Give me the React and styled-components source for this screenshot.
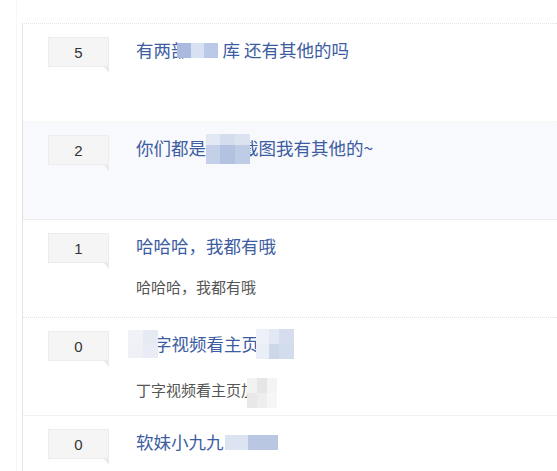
import React from "react";
import styled, { createGlobalStyle } from "styled-components";

const Global = createGlobalStyle`
  html, body { margin: 0; padding: 0; background: #ffffff; }
  body { font-family: "Noto Sans CJK SC", "Liberation Sans", sans-serif; }
`;

const Page = styled.div`
  margin-left: 16px;
  border-left: 1px solid #f7f7f7;
  padding-left: 5px;
  padding-top: 23px;
  min-height: 448px;
`;

const List = styled.ul`
  list-style: none;
  margin: 0;
  padding: 0;
  border-left: 1px solid #e4e4e4;
  border-top: 1px dotted #e2e2e2;
`;

const Row = styled.li`
  display: flex;
  align-items: flex-start;
  height: 84px;
  padding: 13px 0 0 25px;
  background: ${(p) => (p.$active ? "#f7f9fc" : "#ffffff")};
  border-bottom: 1px ${(p) => p.$line} ${(p) => p.$lineColor};
`;

const Badge = styled.div`
  position: relative;
  flex: none;
  box-sizing: border-box;
  width: 61px;
  height: 30px;
  margin-right: 27px;
  background: #f5f5f5;
  border: 1px solid #ececec;
  font-family: "Liberation Sans", Arial, sans-serif;
  font-size: 15px;
  color: #333333;
  display: flex;
  align-items: center;
  justify-content: center;

  &::after {
    content: "";
    position: absolute;
    right: -1px;
    bottom: -7px;
    width: 0;
    height: 0;
    border-top: 6px solid #e9e9e9;
    border-left: 5px solid transparent;
  }
`;

const Content = styled.div`
  display: flex;
  flex-direction: column;
  min-width: 0;
`;

const Title = styled.a`
  display: block;
  font-size: 17.5px;
  line-height: 26px;
  color: #3d5ca2;
  text-decoration: none;
  white-space: nowrap;
`;

const Summary = styled.p`
  margin: 17px 0 0;
  font-size: 15px;
  line-height: 22px;
  color: #555555;
  white-space: nowrap;
`;

const Mosaic = styled.span`
  position: relative;
  z-index: 1;
  display: inline-grid;
  vertical-align: middle;
  grid-template-columns: ${(p) => p.$cols};
  grid-auto-rows: ${(p) => p.$rowH};
  margin-left: ${(p) => p.$ml || 0}px;
  margin-right: ${(p) => p.$mr || 0}px;
  margin-top: ${(p) => p.$mt || 0}px;
`;

const Tile = styled.span`
  display: block;
  background: ${(p) => p.$c};
`;

function Pix({ cols, rowH, colors, ml, mr, mt }) {
  return (
    <Mosaic $cols={cols} $rowH={rowH} $ml={ml} $mr={mr} $mt={mt}>
      {colors.map((c, i) => (
        <Tile key={i} $c={c} />
      ))}
    </Mosaic>
  );
}

export default function App() {
  return (
    <>
      <Global />
      <Page>
        <List>
          <Row $line="dotted" $lineColor="#f3f3f3">
            <Badge>5</Badge>
            <Content>
              <Title href="#">
                有两部
                <Pix
                  cols="14px 13px 14px"
                  rowH="15px"
                  colors={["#a9bade", "#d8e1f1", "#bac9e7"]}
                  ml={-12}
                  mr={5}
                  mt={-3}
                />
                库 还有其他的吗
              </Title>
            </Content>
          </Row>

          <Row $active $line="solid" $lineColor="#ececec">
            <Badge>2</Badge>
            <Content>
              <Title href="#">
                你们都是
                <Pix
                  cols="14px 15px 15px"
                  rowH="11px 19px"
                  colors={[
                    "#e2e8f3",
                    "#d3ddee",
                    "#dbe3f1",
                    "#c4d0e8",
                    "#b3c2e0",
                    "#bfcce6",
                  ]}
                  ml={0}
                  mr={-9}
                  mt={-2}
                />
                截图我有其他的~
              </Title>
            </Content>
          </Row>

          <Row $line="dotted" $lineColor="#e2e2e2">
            <Badge>1</Badge>
            <Content>
              <Title href="#">哈哈哈，我都有哦</Title>
              <Summary>哈哈哈，我都有哦</Summary>
            </Content>
          </Row>

          <Row $line="solid" $lineColor="#f0f0f0">
            <Badge>0</Badge>
            <Content>
              <Title href="#">
                <Pix
                  cols="15px 15px"
                  rowH="14px 14px"
                  colors={["#f0f2f8", "#e6eaf3", "#eef0f6", "#e9ecf4"]}
                  ml={-8}
                  mr={-4}
                  mt={-4}
                />
                字视频看主页
                <Pix
                  cols="13px 10px 15px"
                  rowH="15px 15px"
                  colors={[
                    "#eef1f7",
                    "#e3e9f4",
                    "#d5ddee",
                    "#eaeef6",
                    "#cdd7ea",
                    "#d3dced",
                  ]}
                  ml={-3}
                  mt={-4}
                />
              </Title>
              <Summary>
                丁字视频看主页加
                <Pix
                  cols="10px 10px 10px"
                  rowH="15px 15px"
                  colors={[
                    "#f2f2f2",
                    "#e6e6e6",
                    "#f4f4f4",
                    "#e8e8e8",
                    "#eeeeee",
                    "#f6f6f6",
                  ]}
                  ml={-9}
                  mt={2}
                />
              </Summary>
            </Content>
          </Row>

          <Row $line="dotted" $lineColor="#ffffff">
            <Badge>0</Badge>
            <Content>
              <Title href="#">
                软妹小九九
                <Pix
                  cols="23px 30px"
                  rowH="15px"
                  colors={["#dde4f1", "#b9c7e2"]}
                  ml={1}
                  mt={-3}
                />
              </Title>
            </Content>
          </Row>
        </List>
      </Page>
    </>
  );
}
